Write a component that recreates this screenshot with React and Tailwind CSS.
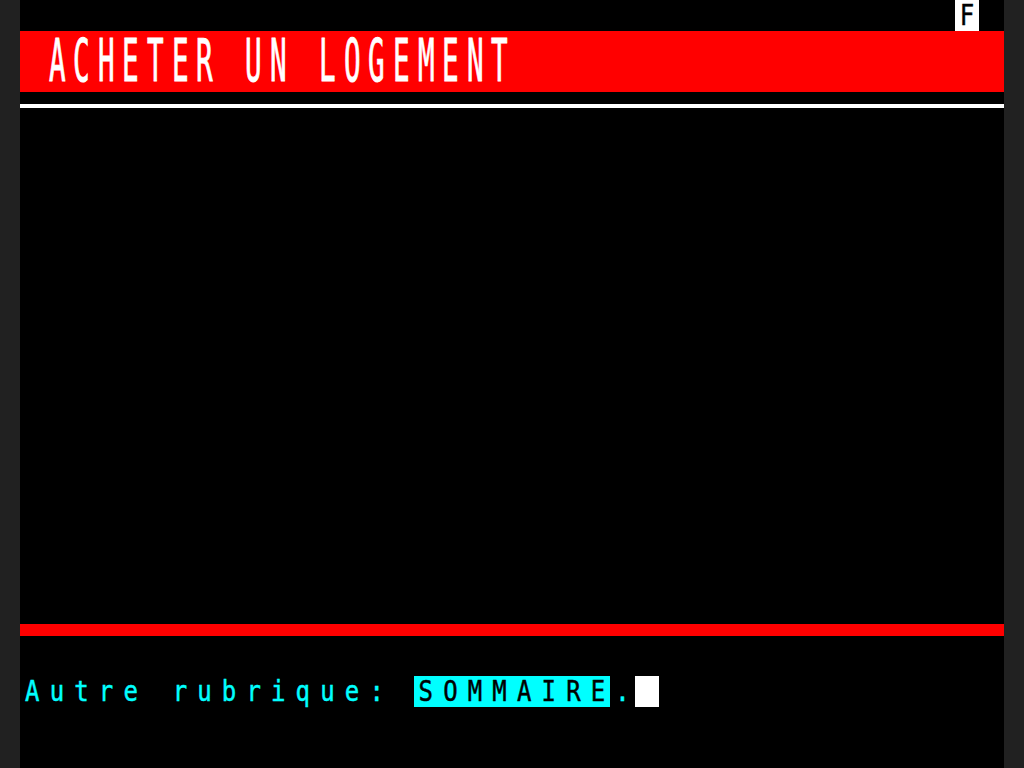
const font = { fontFamily: '"DejaVu Sans Mono", "Liberation Mono", monospace' };

// one Minitel character cell (40 columns across 984px)
function Cell({ ch, className = "", tall = false }) {
  return (
    <span className={`w-[24.6px] shrink-0 flex items-center justify-center ${className}`}>
      <span
        className={`inline-block text-[24px] leading-none font-normal [-webkit-text-stroke:0.4px_currentColor] ${
          tall ? "scale-x-[1.15] scale-y-[2.45]" : "scale-y-[1.2]"
        }`}
      >
        {ch === " " ? "\u00a0" : ch}
      </span>
    </span>
  );
}

function Chars({ text, className, tall }) {
  return text.split("").map((c, i) => <Cell key={i} ch={c} className={className} tall={tall} />);
}

function Gap({ rows = 1 }) {
  return <div style={{ height: `${rows * 30.72}px` }} />;
}

export default function App() {
  return (
    <div className="w-[1024px] h-[768px] bg-[#212121] flex justify-center overflow-hidden" style={font}>
      <div className="w-[984px] h-[768px] bg-black flex flex-col">
        {/* row 0: page marker */}
        <div className="flex h-[30.72px] shrink-0">
          <div className="w-[934.8px] shrink-0" />
          <Chars text="F" className="bg-white text-black" />
        </div>

        {/* rows 1-2: double height title */}
        <div className="flex h-[61.44px] shrink-0 bg-[#ff0000] text-white">
          <div className="w-[24.6px] shrink-0" />
          <Chars text="ACHETER UN LOGEMENT" tall />
        </div>

        {/* row 3: white rule */}
        <div className="h-[30.72px] shrink-0 pt-[11.8px]">
          <div className="h-[4px] bg-white" />
        </div>

        <Gap rows={16} />

        {/* row 20: red rule */}
        <div className="h-[30.72px] shrink-0 pt-[9.6px]">
          <div className="h-[12px] bg-[#ff0000]" />
        </div>

        <Gap />

        {/* row 22: prompt */}
        <div className="flex h-[30.72px] shrink-0 text-[#00ffff]">
          <Chars text="Autre rubrique: " />
          <Chars text="SOMMAIRE" className="bg-[#00ffff] text-black" />
          <Chars text="." />
          <span className="w-[24.6px] shrink-0 bg-white" />
        </div>
      </div>
    </div>
  );
}
